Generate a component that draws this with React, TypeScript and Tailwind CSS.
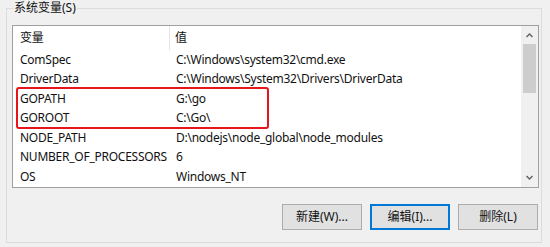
// System variables group box (Windows env var dialog)
const rows: [string, string][] = [
  ['ComSpec', 'C:\\Windows\\system32\\cmd.exe'],
  ['DriverData', 'C:\\Windows\\System32\\Drivers\\DriverData'],
  ['GOPATH', 'G:\\go'],
  ['GOROOT', 'C:\\Go\\'],
  ['NODE_PATH', 'D:\\nodejs\\node_global\\node_modules'],
  ['NUMBER_OF_PROCESSORS', '6'],
  ['OS', 'Windows_NT'],
]

function Chevron({ up }: { up?: boolean }) {
  return (
    <svg width="7" height="5" viewBox="0 0 7 5" className="block">
      <path
        d={up ? 'M0.5 4 L3.5 1 L6.5 4' : 'M0.5 1 L3.5 4 L6.5 1'}
        fill="none"
        stroke="#606060"
        strokeWidth="1.4"
      />
    </svg>
  )
}

export default function App() {
  return (
    <div className="w-[550px] h-[247px] bg-[#f0f0f0] pl-[6px] pr-[8px] pb-[4px] text-[12px] text-[#111] font-['Noto_Sans','Noto_Sans_CJK_SC',sans-serif] overflow-hidden">
      <fieldset className="h-full border border-[#dcdcdc] pl-[5px] pr-[2px]">
        <legend className="ml-[1px] px-[1px] leading-[16px]">系统变量(S)</legend>

        {/* List view */}
        <div className="relative mt-[9px] h-[163px] border border-[#a0a0a0] bg-white flex">
          <div className="flex-1 flex flex-col tracking-[-0.25px]">
            <div className="h-[24px] flex items-center shrink-0">
              <div className="w-[157px] h-full pl-[7px] flex items-center border-r border-[#e5e5e5]">变量</div>
              <div className="pl-[5px]">值</div>
            </div>
            {rows.map(([name, value]) => (
              <div key={name} className="h-[19.5px] flex items-center shrink-0 whitespace-nowrap">
                <div className="w-[163px] pl-[7px]">{name}</div>
                <div>{value}</div>
              </div>
            ))}
          </div>

          {/* Scrollbar */}
          <div className="w-[17px] bg-[#f0f0f0] flex flex-col items-center">
            <div className="h-[17px] flex items-center justify-center mt-[1px]">
              <Chevron up />
            </div>
            <div className="w-[13px] h-[49px] bg-[#cdcdcd]" />
            <div className="flex-1" />
            <div className="h-[17px] flex items-center justify-center mb-[1px]">
              <Chevron />
            </div>
          </div>

          {/* Red annotation */}
          <div className="absolute left-[3px] top-[61px] w-[253px] h-[42px] border-2 border-[#e8141c] rounded-[3px]" />
        </div>

        {/* Buttons */}
        <div className="mt-[16px] flex justify-end gap-[8px] pr-[1px]">
          <button className="w-[80px] h-[26px] bg-[#e1e1e1] border border-[#adadad]">新建(W)...</button>
          <button className="w-[80px] h-[26px] bg-[#e1e1e1] border border-[#0078d7] shadow-[inset_0_0_0_1px_#0078d7]">编辑(I)...</button>
          <button className="w-[80px] h-[26px] bg-[#e1e1e1] border border-[#adadad]">删除(L)</button>
        </div>
      </fieldset>
    </div>
  )
}
